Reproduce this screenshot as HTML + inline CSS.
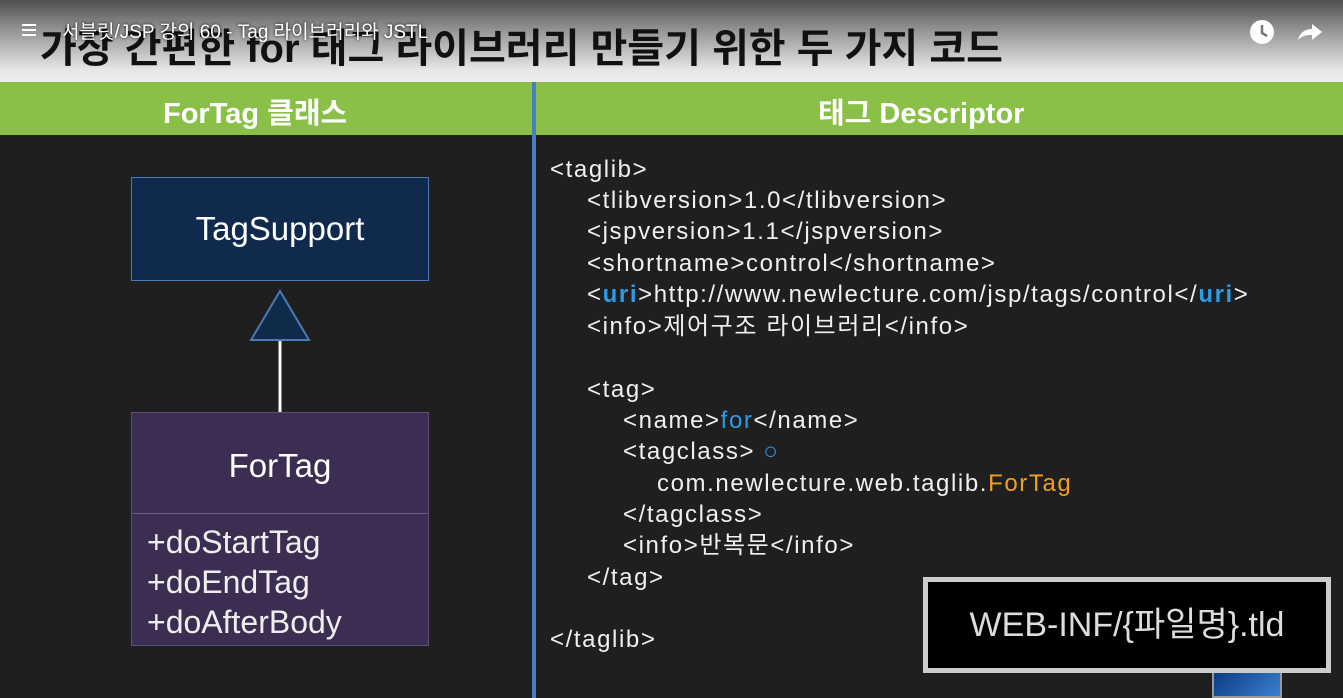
<!DOCTYPE html>
<html><head><meta charset="utf-8"><style>
body{margin:0;width:1343px;height:698px;overflow:hidden;background:#1f1f1f;font-family:"Liberation Sans","Noto Sans CJK KR",sans-serif;position:relative}
.top{position:absolute;left:0;top:0;width:1343px;height:82px;background:linear-gradient(#505050,#9a9a9a 40%,#e6e6e6 85%,#eee)}
.big{position:absolute;left:40px;top:16px;font-size:40px;font-weight:bold;color:#111;white-space:nowrap}
.yt{position:absolute;left:62px;top:17px;font-size:19px;color:#fff;text-shadow:0 0 3px #000}
.green{position:absolute;left:0;top:82px;width:1343px;height:53px;background:#8abf48}
.gt{position:absolute;top:90px;font-size:29px;font-weight:bold;color:#fff}
.vl{position:absolute;left:532px;top:82px;width:4px;height:616px;background:#4a7ec4}
.c{position:absolute;font-size:24px;line-height:28px;letter-spacing:1.6px;color:#f0f0f0;white-space:nowrap}
.b{color:#2b9be8}.o{color:#f0a020}
.box{position:absolute;box-sizing:border-box}
</style></head><body>
<div class="top"></div>
<div class="big">가장 간편한 for 태그 라이브러리 만들기 위한 두 가지 코드</div>
<div style="position:absolute;left:22px;top:24px;width:14px;height:2px;background:#fff;box-shadow:0 5px #fff,0 10px #fff"></div>
<div class="yt">서블릿/JSP 강의 60 - Tag 라이브러리와 JSTL</div>
<svg style="position:absolute;left:1248px;top:18px" width="80" height="30"><circle cx="14" cy="14" r="12" fill="#fff"/><path d="M14 7v8l5 3" stroke="#777" stroke-width="2.5" fill="none"/><path d="M50 22c2-8 8-11 14-11v-5l10 8-10 8v-5c-6 0-10 1-14 5z" fill="#fff"/></svg>
<div class="green"></div>
<div class="gt" style="left:163px">ForTag 클래스</div>
<div class="gt" style="left:818px">태그 Descriptor</div>
<div class="vl"></div>
<div class="box" style="left:131px;top:177px;width:298px;height:104px;background:#0f2a4c;border:1px solid #4a7ab5;color:#fff;font-size:33px;text-align:center;line-height:102px">TagSupport</div>
<svg style="position:absolute;left:240px;top:285px" width="80" height="130"><line x1="40" y1="55" x2="40" y2="127" stroke="#fff" stroke-width="3"/><path d="M40 6L11 55H69Z" fill="#102a4a" stroke="#4a7ab5" stroke-width="2"/></svg>
<div class="box" style="left:131px;top:412px;width:298px;height:234px;background:#3b2e52;border:1px solid #5e4d7e">
<div style="height:100px;border-bottom:1px solid #6a5a88;color:#fff;font-size:33px;text-align:center;line-height:106px">ForTag</div>
<div style="color:#eee;font-size:32px;line-height:40px;padding:8px 0 0 15px">+doStartTag<br>+doEndTag<br>+doAfterBody</div>
</div>
<div class="c" style="left:550px;top:156px">&lt;taglib&gt;</div>
<div class="c" style="left:587px;top:187px">&lt;tlibversion&gt;1.0&lt;/tlibversion&gt;</div>
<div class="c" style="left:587px;top:218px">&lt;jspversion&gt;1.1&lt;/jspversion&gt;</div>
<div class="c" style="left:587px;top:250px">&lt;shortname&gt;control&lt;/shortname&gt;</div>
<div class="c" style="left:587px;top:281px">&lt;<span class="b"><b>uri</b></span>&gt;http://www.newlecture.com/jsp/tags/control&lt;/<span class="b"><b>uri</b></span>&gt;</div>
<div class="c" style="left:587px;top:313px">&lt;info&gt;제어구조 라이브러리&lt;/info&gt;</div>
<div class="c" style="left:587px;top:376px">&lt;tag&gt;</div>
<div class="c" style="left:623px;top:407px">&lt;name&gt;<span class="b">for</span>&lt;/name&gt;</div>
<div class="c" style="left:623px;top:438px">&lt;tagclass&gt; <span class="b">○</span></div>
<div class="c" style="left:657px;top:470px">com.newlecture.web.taglib.<span class="o">ForTag</span></div>
<div class="c" style="left:623px;top:501px">&lt;/tagclass&gt;</div>
<div class="c" style="left:623px;top:532px">&lt;info&gt;반복문&lt;/info&gt;</div>
<div class="c" style="left:587px;top:564px">&lt;/tag&gt;</div>
<div class="c" style="left:550px;top:626px">&lt;/taglib&gt;</div>
<div class="box" style="left:1212px;top:668px;width:70px;height:30px;background:linear-gradient(135deg,#0a3a80,#3a80d0);border:2px solid #999"></div>
<div class="box" style="left:923px;top:577px;width:408px;height:96px;background:#000;border:5px solid #ccc;color:#ddd;font-size:34px;text-align:center;line-height:86px">WEB-INF/{파일명}.tld</div>
</body></html>
